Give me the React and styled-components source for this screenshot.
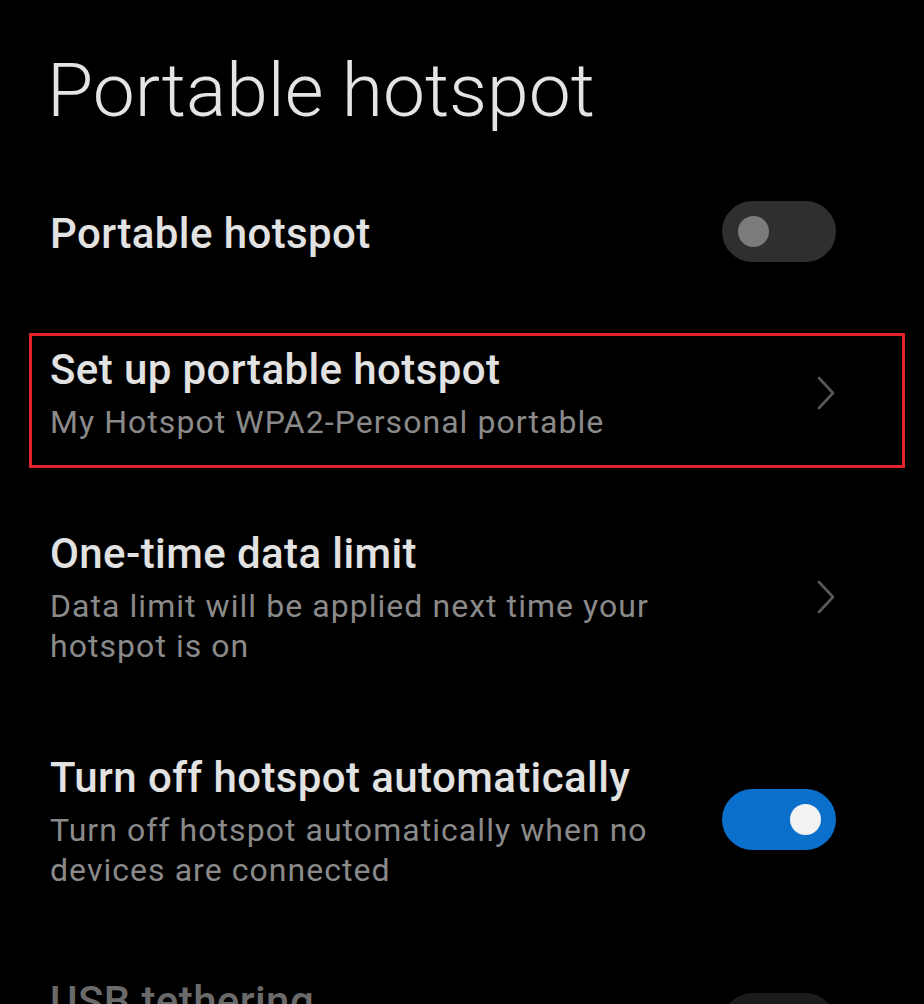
import React from 'react';
import styled, { createGlobalStyle } from 'styled-components';

const GlobalStyle = createGlobalStyle`
  html, body {
    margin: 0;
    padding: 0;
    background: #000;
  }
  body {
    font-family: Roboto, "Noto Sans", "Liberation Sans", sans-serif;
    -webkit-font-smoothing: antialiased;
  }
`;

const Screen = styled.div`
  width: 924px;
  height: 1004px;
  overflow: hidden;
  background: #000;
`;

const PageTitle = styled.h1`
  margin: 0;
  padding: 45px 0 0 47px;
  font-size: 75px;
  line-height: 90px;
  font-weight: 300;
  color: #e4e4e4;
`;

const List = styled.div`
  display: flex;
  flex-direction: column;
  margin-top: 31px;
`;

const Row = styled.div`
  position: relative;
  display: flex;
  align-items: center;
  gap: 24px;
  padding: 44px 88px 44px 50px;
`;

const Highlight = styled.div`
  position: absolute;
  top: 31px;
  bottom: 18px;
  left: 29px;
  right: 19px;
  border: 3px solid #e0242a;
  pointer-events: none;
`;

const Texts = styled.div`
  flex: 1;
  display: flex;
  flex-direction: column;
  gap: 8px;
`;

const Title = styled.div`
  font-size: 42px;
  line-height: 48px;
  font-weight: 500;
  letter-spacing: 0.4px;
  color: ${p => (p.$disabled ? '#6a6a6a' : '#e2e2e2')};
`;

const Summary = styled.div`
  font-size: 32px;
  line-height: 40px;
  font-weight: 400;
  letter-spacing: 1.05px;
  color: #8a8a8a;
  max-width: 640px;
`;

const Track = styled.div`
  position: relative;
  flex: none;
  width: 114px;
  height: 61px;
  margin: -10px 0 -4px;
  border-radius: 31px;
  background: ${p => (p.$on ? '#0b70cc' : p.$disabled ? '#1b1b1b' : '#2f2f2f')};
`;

const Knob = styled.div`
  position: absolute;
  top: 15px;
  width: 31px;
  height: 31px;
  border-radius: 50%;
  left: ${p => (p.$on ? '68px' : '16px')};
  background: ${p => (p.$on ? '#f2f2f2' : p.$disabled ? '#3a3a3a' : '#7b7b7b')};
`;

const Chevron = styled.svg`
  flex: none;
  width: 20px;
  height: 34px;
  margin-top: -3px;
`;

const Toggle = ({ on, disabled }) => (
  <Track $on={on} $disabled={disabled}>
    <Knob $on={on} $disabled={disabled} />
  </Track>
);

const Arrow = () => (
  <Chevron viewBox="0 0 20 34">
    <path d="M3 2 L17 17 L3 32" fill="none" stroke="#585858" strokeWidth="2.6" strokeLinecap="round" strokeLinejoin="round" />
  </Chevron>
);

const items = [
  { title: 'Portable hotspot', control: 'toggle', on: false },
  { title: 'Set up portable hotspot', summary: 'My Hotspot WPA2-Personal portable', control: 'arrow', highlight: true },
  { title: 'One-time data limit', summary: 'Data limit will be applied next time your hotspot is on', control: 'arrow' },
  { title: 'Turn off hotspot automatically', summary: 'Turn off hotspot automatically when no devices are connected', control: 'toggle', on: true },
  { title: 'USB tethering', summary: 'USB not connected', control: 'toggle', on: false, disabled: true },
];

export default function App() {
  return (
    <Screen>
      <GlobalStyle />
      <PageTitle>Portable hotspot</PageTitle>
      <List>
        {items.map(item => (
          <Row key={item.title}>
            <Texts>
              <Title $disabled={item.disabled}>{item.title}</Title>
              {item.summary && <Summary>{item.summary}</Summary>}
            </Texts>
            {item.control === 'toggle' ? <Toggle on={item.on} disabled={item.disabled} /> : <Arrow />}
            {item.highlight && <Highlight />}
          </Row>
        ))}
      </List>
    </Screen>
  );
}
